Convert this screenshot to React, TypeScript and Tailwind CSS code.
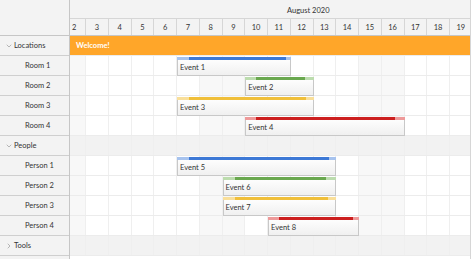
import { ChevronDown, ChevronRight } from 'lucide-react';

type Row = { name: string; parent?: boolean; open?: boolean };

const rows: Row[] = [
  { name: 'Locations', parent: true, open: true },
  { name: 'Room 1' },
  { name: 'Room 2' },
  { name: 'Room 3' },
  { name: 'Room 4' },
  { name: 'People', parent: true, open: true },
  { name: 'Person 1' },
  { name: 'Person 2' },
  { name: 'Person 3' },
  { name: 'Person 4' },
  { name: 'Tools', parent: true },
];

const days = [2, 3, 4, 5, 6, 7, 8, 9, 10, 11, 12, 13, 14, 15, 16, 17, 18, 19];
const weekend = [2, 8, 9, 15, 16];
const COL = 22.75;

const colors = {
  blue: { dark: 'bg-[#3d79d6]', light: 'bg-[#a7c3ee]' },
  green: { dark: 'bg-[#6aa84f]', light: 'bg-[#bcdcae]' },
  yellow: { dark: 'bg-[#f0bf3a]', light: 'bg-[#f9df9a]' },
  red: { dark: 'bg-[#cc1f1f]', light: 'bg-[#ee9a9a]' },
};

type Ev = { row: string; text: string; start: number; days: number; from: number; to: number; color: keyof typeof colors };

const events: Ev[] = [
  { row: 'Room 1', text: 'Event 1', start: 7, days: 5, from: 12, to: 109, color: 'blue' },
  { row: 'Room 2', text: 'Event 2', start: 10, days: 3, from: 11, to: 60, color: 'green' },
  { row: 'Room 3', text: 'Event 3', start: 7, days: 6, from: 12, to: 129, color: 'yellow' },
  { row: 'Room 4', text: 'Event 4', start: 10, days: 7, from: 11, to: 150, color: 'red' },
  { row: 'Person 1', text: 'Event 5', start: 7, days: 7, from: 12, to: 152, color: 'blue' },
  { row: 'Person 2', text: 'Event 6', start: 9, days: 5, from: 12, to: 103, color: 'green' },
  { row: 'Person 3', text: 'Event 7', start: 9, days: 5, from: 12, to: 105, color: 'yellow' },
  { row: 'Person 4', text: 'Event 8', start: 11, days: 4, from: 11, to: 85, color: 'red' },
];

function EventBox({ ev }: { ev: Ev }) {
  const c = colors[ev.color];
  return (
    <div
      className="absolute top-px h-[19px] flex flex-col border border-[#c8c8c8] bg-gradient-to-b from-white to-[#f0f0f0]"
      style={{ left: (ev.start - 2) * COL, width: ev.days * COL }}
    >
      <div className={`relative h-[3px] -mx-px -mt-px ${c.light}`}>
        <div className={`absolute top-0 h-[3px] ${c.dark}`} style={{ left: ev.from, width: ev.to - ev.from }} />
      </div>
      <div className="flex-1 flex items-center pl-[2px] text-[7.5px] text-[#333] leading-none whitespace-nowrap">
        {ev.text}
      </div>
    </div>
  );
}

export default function App() {
  return (
    <div
      className="w-[474px] h-[259px] bg-white flex text-[#333] overflow-hidden"
      style={{ fontFamily: 'Lato, "Noto Sans", sans-serif' }}
    >
      {/* row headers */}
      <div className="w-[70px] flex-shrink-0 flex flex-col border-r border-[#c6c6c6] bg-[#f3f3f3]">
        <div className="h-[36px] flex-shrink-0 border-b border-[#c6c6c6]" />
        {rows.map((r) => (
          <div
            key={r.name}
            className="h-[20px] flex-shrink-0 border-b border-[#cfcfcf] flex items-center text-[7.5px] leading-none whitespace-nowrap"
          >
            {r.parent ? (
              <div className="flex items-center pl-[5px] gap-[1px]">
                {r.open ? (
                  <ChevronDown size={8} className="text-[#777]" strokeWidth={1.5} />
                ) : (
                  <ChevronRight size={8} className="text-[#777]" strokeWidth={1.5} />
                )}
                <span>{r.name}</span>
              </div>
            ) : (
              <span className="pl-[25px]">{r.name}</span>
            )}
          </div>
        ))}
      </div>

      {/* timeline */}
      <div className="w-[401px] flex-shrink-0 overflow-hidden flex flex-col border-r border-[#d6d6d6]">
        <div className="h-[19px] flex-shrink-0 bg-[#f3f3f3] border-b border-[#d6d6d6] flex items-center pt-[3px] pl-[217px] text-[7.5px] leading-none whitespace-nowrap">
          August 2020
        </div>
        <div className="h-[17px] flex-shrink-0 bg-[#f3f3f3] border-b border-[#c6c6c6] flex ml-[-6.75px]">
          {days.map((d) => (
            <div
              key={d}
              className="w-[22.75px] flex-shrink-0 border-r border-[#d6d6d6] flex items-center justify-center pt-px text-[7.5px] leading-none"
            >
              {d}
            </div>
          ))}
        </div>
        {rows.map((r) => (
          <div key={r.name} className="h-[20px] flex-shrink-0 border-b border-[#ececec] relative">
            <div className="absolute inset-0 flex ml-[-6.75px]">
              {days.map((d) => (
                <div
                  key={d}
                  className={`w-[22.75px] flex-shrink-0 border-r border-[#efefef] ${
                    r.parent ? 'bg-[#f2f2f2]' : weekend.includes(d) ? 'bg-[#f8f8f8]' : 'bg-white'
                  }`}
                />
              ))}
            </div>
            {r.name === 'Locations' && (
              <div className="absolute inset-0 bg-[#ffa629] flex items-center pl-[6px] text-[7.5px] text-white font-bold leading-none">
                Welcome!
              </div>
            )}
            <div className="absolute inset-0 ml-[-6.75px]">
              {events
                .filter((e) => e.row === r.name)
                .map((e) => (
                  <EventBox key={e.text} ev={e} />
                ))}
            </div>
          </div>
        ))}
      </div>
    </div>
  );
}
